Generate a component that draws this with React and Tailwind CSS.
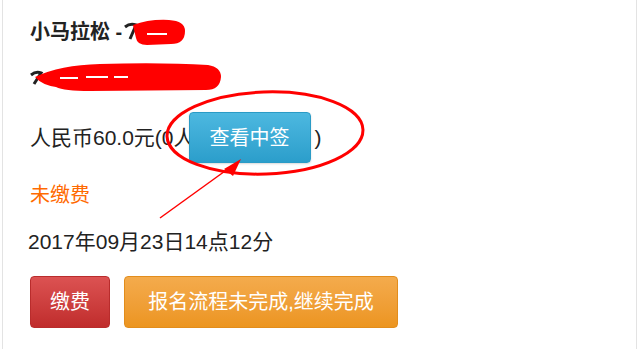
export default function App() {
  return (
    <div
      className="relative w-[640px] h-[349px] overflow-hidden bg-white text-[#222]"
      style={{ fontFamily: '"Liberation Sans", "Noto Sans CJK SC", sans-serif' }}
    >
      <div className="ml-[2px] w-[635px] h-full border-x border-[#e3e3e3] pl-[27px]">
        {/* title */}
        <div className="pt-[20px] flex items-center h-[44px] text-[20px] leading-[24px] font-bold">
          <span>小马拉松 - </span>
          <svg width="64" height="28" viewBox="0 0 64 28" className="ml-[1px]">
            <path d="M2 9 Q7 5 13 7 L7 21" stroke="#222" strokeWidth="3" fill="none" />
            <path d="M10 7 Q26 1 46 2 Q62 3 62 13 Q62 26 48 26 L24 27 Q14 27 13 20 Q11 12 10 7Z" fill="#ff0000" />
            <path d="M24 16 L44 16" stroke="#fff" strokeWidth="2" />
          </svg>
        </div>

        {/* redacted line */}
        <div className="mt-[21px] h-[24px] flex items-center">
          <svg width="192" height="30" viewBox="0 0 192 30">
            <path d="M1 13 Q6 9 11 11 L4 22" stroke="#222" strokeWidth="3" fill="none" />
            <path d="M5 15 Q30 3 70 2 Q130 0 178 3 Q191 5 191 15 Q190 28 176 28 L60 29 Q34 29 26 25 Q12 23 5 15Z" fill="#ff0000" />
            <path d="M30 16 L48 16 M56 15 L78 15 M84 15 L98 15" stroke="#fff" strokeWidth="2" />
          </svg>
        </div>

        {/* price + button */}
        <div className="mt-[23px] h-[51px] flex items-center text-[21px] leading-[24px]">
          <span>人民币60.0元(0人</span>
          <button className="ml-[-6px] w-[122px] h-[51px] rounded-[4px] border border-[#2a9bc6] bg-gradient-to-b from-[#4cb8e0] to-[#2b9ecb] text-white text-[20px] shadow-[0_1px_2px_rgba(0,0,0,0.15)]">
            查看中签
          </button>
          <span className="ml-[4px]">)</span>
        </div>

        <div className="mt-[20px] h-[24px] text-[20px] leading-[24px] text-[#ff6a00]">未缴费</div>

        <div className="mt-[23px] h-[24px] text-[21px] leading-[24px] -ml-[2px]">2017年09月23日14点12分</div>

        <div className="mt-[22px] flex gap-[14px]">
          <button className="w-[80px] h-[52px] rounded-[4px] border border-[#b92c2c] bg-gradient-to-b from-[#dc5252] to-[#c02c2c] text-white text-[20px]">
            缴费
          </button>
          <button className="w-[274px] h-[52px] rounded-[4px] border border-[#e28d1c] bg-gradient-to-b from-[#f4ab4c] to-[#ec951f] text-white text-[20px]">
            报名流程未完成,继续完成
          </button>
        </div>
      </div>

      {/* annotation: circle + arrow */}
      <svg className="absolute left-0 top-0 pointer-events-none" width="640" height="349" viewBox="0 0 640 349">
        <ellipse cx="265" cy="133" rx="98" ry="41" transform="rotate(-2 265 133)" fill="none" stroke="#ff0000" strokeWidth="3" />
        <path d="M160 218 L232 166" stroke="#ff0000" strokeWidth="1.5" />
        <path d="M241 159 L224 169 L233 176Z" fill="#ff0000" />
      </svg>
    </div>
  );
}
